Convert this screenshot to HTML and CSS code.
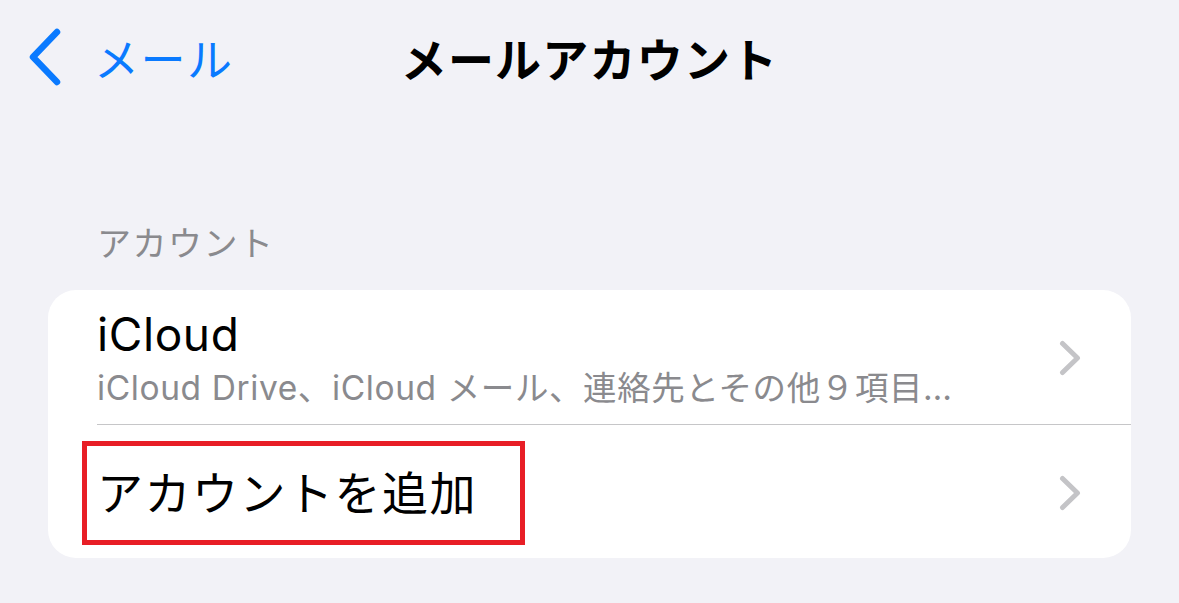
FILE: index.html
```html
<!DOCTYPE html>
<html lang="ja">
<head>
    <meta charset="UTF-8">
    <meta name="viewport" content="width=device-width, initial-scale=1.0">
    <title>メールアカウント</title>
    <link rel="stylesheet" href="styles.css">
</head>
<body>
    <!-- Navbar -->
    <nav class="navbar">
        <a href="#" class="back">
            <svg class="back-icon" width="34" height="58" viewBox="0 0 34 58">
                <path d="M29 4 L5 29 L29 54" fill="none" stroke="currentColor" stroke-width="6.5" stroke-linecap="round" stroke-linejoin="round"/>
            </svg>
            <span>メール</span>
        </a>
        <h1 class="title">メールアカウント</h1>
        <div></div>
    </nav>

    <!-- Accounts -->
    <div class="section-header">アカウント</div>
    <div class="card">
        <a href="#" class="row">
            <div class="row-body divider">
                <div class="row-text">
                    <div class="row-title">iCloud</div>
                    <div class="row-subtitle">iCloud Drive、iCloud メール、連絡先とその他９項目…</div>
                </div>
                <svg class="chevron" width="22" height="36" viewBox="0 0 22 36">
                    <path d="M3.5 3.5 L18.5 18 L3.5 32.5" fill="none" stroke="currentColor" stroke-width="5" stroke-linecap="round" stroke-linejoin="round"/>
                </svg>
            </div>
        </a>
        <a href="#" class="row">
            <div class="row-body add">
                <div class="row-text">
                    <span class="row-title highlight">アカウントを追加</span>
                </div>
                <svg class="chevron" width="22" height="36" viewBox="0 0 22 36">
                    <path d="M3.5 3.5 L18.5 18 L3.5 32.5" fill="none" stroke="currentColor" stroke-width="5" stroke-linecap="round" stroke-linejoin="round"/>
                </svg>
            </div>
        </a>
    </div>
</body>
</html>
```

FILE: styles.css
```css
/* Reset & Global Styling */
* {
    margin: 0;
    padding: 0;
    box-sizing: border-box;
}
body {
    font-family: Inter, "Noto Sans CJK JP", sans-serif;
    background-color: #f2f2f7;
    color: #000;
    width: 1179px;
    height: 603px;
    overflow: hidden;
}
a {
    text-decoration: none;
    color: inherit;
}

/* Navbar */
.navbar {
    height: 114px;
    display: grid;
    grid-template-columns: 1fr auto 1fr;
    align-items: center;
}
.back {
    display: flex;
    align-items: center;
    gap: 32px;
    padding-left: 28px;
    color: #0a7aff;
    font-size: 45px;
    letter-spacing: 1.5px;
}
.back-icon {
    display: block;
}
.title {
    font-size: 46px;
    font-weight: 700;
    letter-spacing: 1.2px;
}

/* Section */
.section-header {
    padding: 110px 0 0 97px;
    font-size: 34px;
    line-height: 40px;
    color: #8a8a8e;
    letter-spacing: 1.5px;
}

/* Card */
.card {
    margin: 26px 48px 0;
    background-color: #fff;
    border-radius: 28px;
    overflow: hidden;
}
.row {
    display: block;
    padding-left: 49px;
}
.row-body {
    display: flex;
    align-items: center;
    justify-content: space-between;
    padding-right: 50px;
}
.divider {
    height: 135px;
    border-bottom: 1px solid #c6c6c8;
    padding-top: 2px;
}
.add {
    height: 133px;
    padding-top: 2px;
}
.row-title {
    font-size: 46px;
    line-height: 52px;
    letter-spacing: 0.6px;
}
.add .row-title {
    letter-spacing: 1.5px;
}
.row-subtitle {
    margin-top: 8px;
    font-size: 33.5px;
    line-height: 40px;
    color: #8a8a8e;
    letter-spacing: 0.6px;
}
.chevron {
    display: block;
    color: #c4c4c7;
}

/* Red annotation box */
.highlight {
    position: relative;
    display: inline-block;
}
.highlight::after {
    content: "";
    position: absolute;
    left: -15px;
    right: -48px;
    top: -26px;
    bottom: -26px;
    border: 5px solid #e81e26;
}
```
